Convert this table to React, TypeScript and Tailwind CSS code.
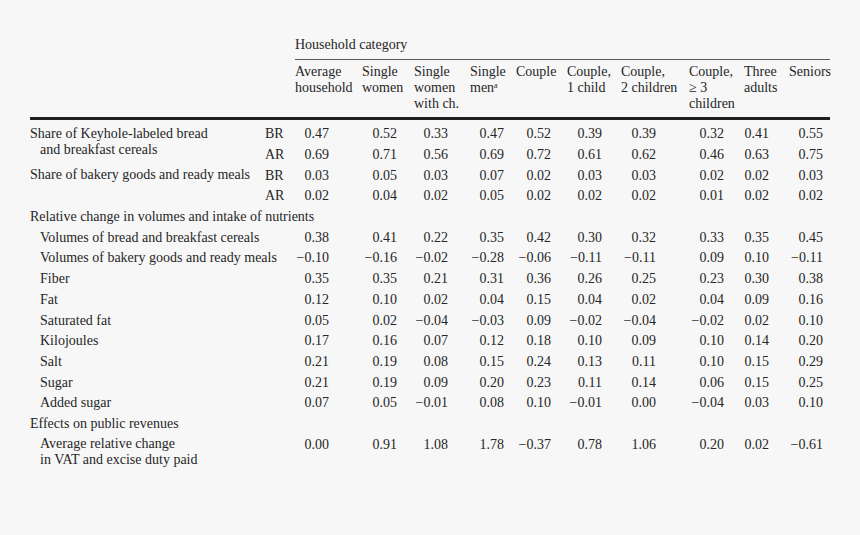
const COLS =
  "grid grid-cols-[235px_30px_67px_52px_56px_46px_51px_54px_68px_55px_45px_41px]";

// right padding per data column so the figures line up as in the print
const PADS = [
  "pr-[33px]",
  "pr-[17px]",
  "pr-[22px]",
  "pr-[12px]",
  "pr-[16px]",
  "pr-[19px]",
  "pr-[33px]",
  "pr-[20px]",
  "pr-[20px]",
  "pr-[7px]",
];

const HEADERS: React.ReactNode[][] = [
  ["Average", "household"],
  ["Single", "women"],
  ["Single", "women", "with ch."],
  [
    "Single",
    <>
      men<sup className="text-[8px]">a</sup>
    </>,
  ],
  ["Couple"],
  ["Couple,", "1 child"],
  ["Couple,", "2 children"],
  ["Couple,", "\u2265 3", "children"],
  ["Three", "adults"],
  ["Seniors"],
];

type Row =
  | { kind: "group"; label: string }
  | { kind: "item"; label: string; values: string[] }
  | { kind: "pair"; lines: [string, string]; br: string[]; ar: string[] }
  | { kind: "tall"; lines: [string, string]; values: string[] };

const m = (s: string) => s.replace(/-/g, "\u2212");

const ROWS: Row[] = [
  {
    kind: "pair",
    lines: ["Share of Keyhole-labeled bread", "and breakfast cereals"],
    br: ["0.47", "0.52", "0.33", "0.47", "0.52", "0.39", "0.39", "0.32", "0.41", "0.55"],
    ar: ["0.69", "0.71", "0.56", "0.69", "0.72", "0.61", "0.62", "0.46", "0.63", "0.75"],
  },
  {
    kind: "pair",
    lines: ["Share of bakery goods and ready meals", ""],
    br: ["0.03", "0.05", "0.03", "0.07", "0.02", "0.03", "0.03", "0.02", "0.02", "0.03"],
    ar: ["0.02", "0.04", "0.02", "0.05", "0.02", "0.02", "0.02", "0.01", "0.02", "0.02"],
  },
  { kind: "group", label: "Relative change in volumes and intake of nutrients" },
  {
    kind: "item",
    label: "Volumes of bread and breakfast cereals",
    values: ["0.38", "0.41", "0.22", "0.35", "0.42", "0.30", "0.32", "0.33", "0.35", "0.45"],
  },
  {
    kind: "item",
    label: "Volumes of bakery goods and ready meals",
    values: ["-0.10", "-0.16", "-0.02", "-0.28", "-0.06", "-0.11", "-0.11", "0.09", "0.10", "-0.11"],
  },
  {
    kind: "item",
    label: "Fiber",
    values: ["0.35", "0.35", "0.21", "0.31", "0.36", "0.26", "0.25", "0.23", "0.30", "0.38"],
  },
  {
    kind: "item",
    label: "Fat",
    values: ["0.12", "0.10", "0.02", "0.04", "0.15", "0.04", "0.02", "0.04", "0.09", "0.16"],
  },
  {
    kind: "item",
    label: "Saturated fat",
    values: ["0.05", "0.02", "-0.04", "-0.03", "0.09", "-0.02", "-0.04", "-0.02", "0.02", "0.10"],
  },
  {
    kind: "item",
    label: "Kilojoules",
    values: ["0.17", "0.16", "0.07", "0.12", "0.18", "0.10", "0.09", "0.10", "0.14", "0.20"],
  },
  {
    kind: "item",
    label: "Salt",
    values: ["0.21", "0.19", "0.08", "0.15", "0.24", "0.13", "0.11", "0.10", "0.15", "0.29"],
  },
  {
    kind: "item",
    label: "Sugar",
    values: ["0.21", "0.19", "0.09", "0.20", "0.23", "0.11", "0.14", "0.06", "0.15", "0.25"],
  },
  {
    kind: "item",
    label: "Added sugar",
    values: ["0.07", "0.05", "-0.01", "0.08", "0.10", "-0.01", "0.00", "-0.04", "0.03", "0.10"],
  },
  { kind: "group", label: "Effects on public revenues" },
  {
    kind: "tall",
    lines: ["Average relative change", "in VAT and excise duty paid"],
    values: ["0.00", "0.91", "1.08", "1.78", "-0.37", "0.78", "1.06", "0.20", "0.02", "-0.61"],
  },
];

function Values({ values }: { values: string[] }) {
  return (
    <>
      {values.map((v, i) => (
        <div key={i} className={`text-right whitespace-nowrap ${PADS[i]}`}>
          {m(v)}
        </div>
      ))}
    </>
  );
}

function BodyRows() {
  const out: React.ReactNode[] = [];
  ROWS.forEach((r, idx) => {
    if (r.kind === "group") {
      out.push(
        <div key={idx} className="col-span-12 whitespace-nowrap">
          {r.label}
        </div>
      );
    } else if (r.kind === "item") {
      out.push(
        <div key={`${idx}l`} className="col-span-2 pl-[10px] whitespace-nowrap">
          {r.label}
        </div>
      );
      out.push(<Values key={`${idx}v`} values={r.values} />);
    } else if (r.kind === "pair") {
      out.push(
        <div key={`${idx}l`} className="row-span-2 self-start pt-[2px] whitespace-nowrap">
          <div>{r.lines[0]}</div>
          {r.lines[1] && <div className="pl-[10px]">{r.lines[1]}</div>}
        </div>
      );
      out.push(<div key={`${idx}b`}>BR</div>);
      out.push(<Values key={`${idx}bv`} values={r.br} />);
      out.push(<div key={`${idx}a`}>AR</div>);
      out.push(<Values key={`${idx}av`} values={r.ar} />);
    } else {
      out.push(
        <div key={`${idx}l`} className="col-span-2 self-start pt-[2px] pl-[10px] whitespace-nowrap h-[20.7px] overflow-visible">
          <div>{r.lines[0]}</div>
          <div>{r.lines[1]}</div>
        </div>
      );
      out.push(<Values key={`${idx}v`} values={r.values} />);
    }
  });
  return <>{out}</>;
}

export default function App() {
  return (
    <div className="w-[860px] h-[535px] bg-[#f7f7f7] text-[#262626] text-[14px] leading-4 font-['Liberation_Serif','Times_New_Roman',serif] pt-[37px] overflow-hidden">
      <div className="ml-[30px] w-[800px]">
        {/* column header block */}
        <div className={COLS}>
          <div className="col-start-3 col-span-10">
            <div className="pb-[6px] border-b border-[#5a5a5a]">Household category</div>
          </div>
          {HEADERS.map((lines, i) => (
            <div key={i} className={`pt-[4px] whitespace-nowrap ${i === 0 ? "col-start-3" : ""}`}>
              {lines.map((l, j) => (
                <div key={j}>{l}</div>
              ))}
            </div>
          ))}
        </div>

        <div className="mt-[5px] h-[2.7px] bg-[#1f1f1f]" />

        {/* table body */}
        <div className={`${COLS} auto-rows-[20.7px] items-center mt-[4.3px]`}>
          <BodyRows />
        </div>
      </div>
    </div>
  );
}
